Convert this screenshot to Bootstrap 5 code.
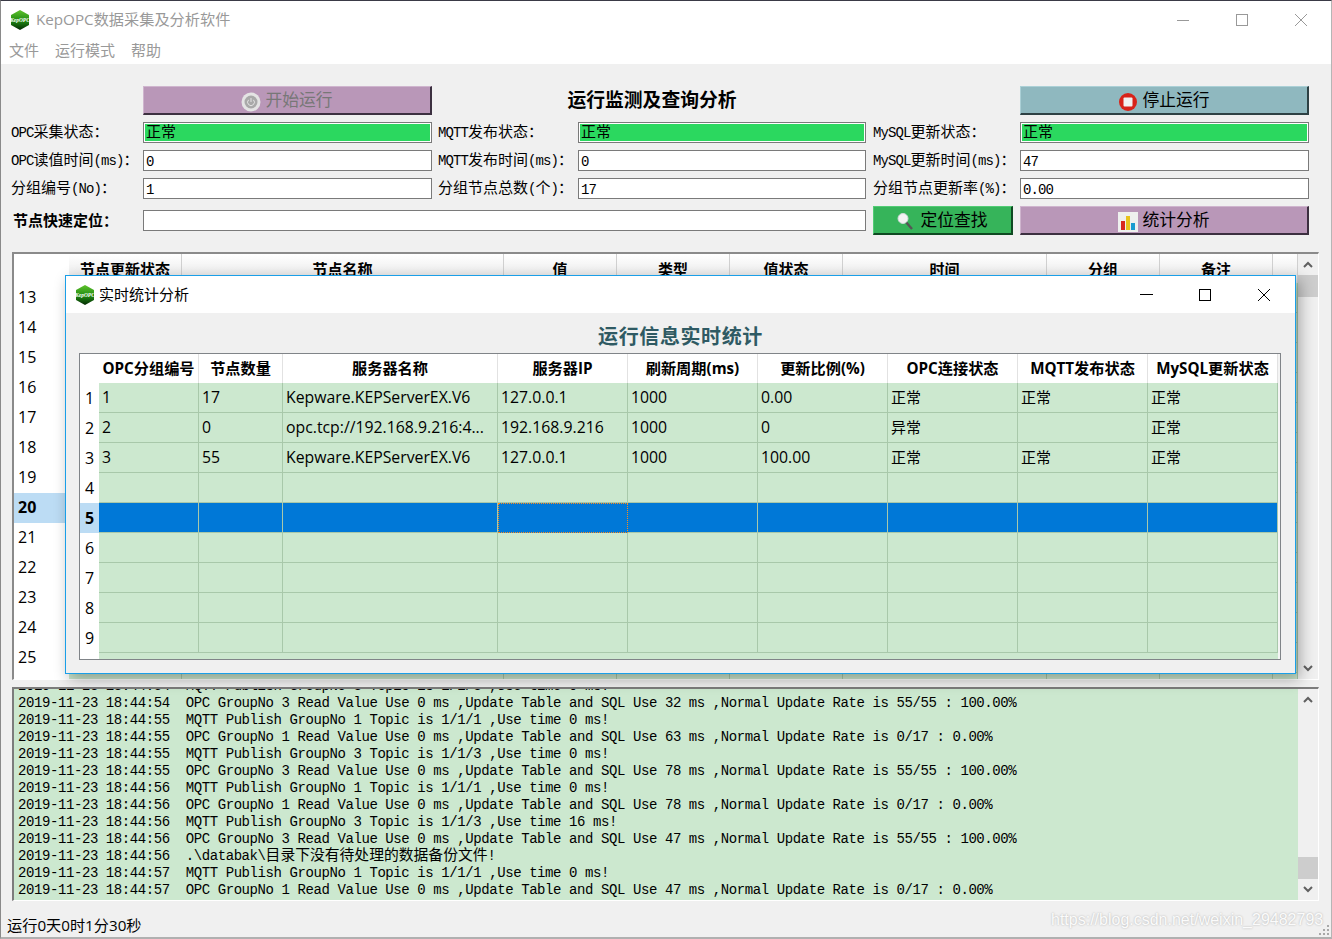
<!DOCTYPE html>
<html lang="zh-CN">
<head>
<meta charset="utf-8">
<title>KepOPC数据采集及分析软件</title>
<link href="https://cdn.jsdelivr.net/npm/bootstrap@5.3.0/dist/css/bootstrap.min.css" rel="stylesheet">
<style>
html,body{height:100%}
body{margin:0;background:#f0f0f0;color:#000;font-family:"Open Sans","Noto Sans CJK SC",sans-serif;font-size:15px;overflow:hidden}
.appwin{width:1332px;height:939px;border-left:1px solid #8a8a8a;border-right:1px solid #b5b5b5;border-top:1px solid #3a3a46;border-bottom:2px solid #b0b0b0;position:relative;overflow:hidden}
.titlerow{height:37px;background:#fff;color:#999}
.titlerow .ttl{font-size:15.2px;margin-left:5px}
.logo{width:22px;height:22px;margin-left:8px;flex:none}
.titlerow .winbtns{margin-right:1px}
.ctl{width:58.7px;height:100%;display:flex;align-items:center;justify-content:center}
.menurow{height:26px;background:#fff;color:#999;padding:0 0 2px 8px;gap:16px;font-size:15px}
.formgrid{display:grid;grid-template-columns:132px 289px 146px 288px 154px 289px;grid-template-rows:29px 21px 21px 21px 29px;row-gap:7px;margin:22px 0 0 10px;align-items:center}
.lbl{font-family:"Liberation Mono","Noto Sans CJK SC",monospace;font-size:15px;line-height:21px;white-space:nowrap;padding-top:2px}
.lbl.mid{padding-left:6px}
.lbl.rgt{padding-left:7px}
.lbl.strong{font-weight:700;padding:3px 0 0 2px}
.lat{font-family:"Liberation Mono",monospace;font-size:14px;letter-spacing:-.9px}
.fld.form-control{border:1px solid #7a7a7a;border-radius:0;background:#fff;padding:0 2px;height:21px;min-height:0;line-height:22px;font-family:"Liberation Mono","Noto Sans CJK SC",monospace;font-size:14px;letter-spacing:-.9px;color:#000}
.fld.okfld{background:#2bd85f;box-shadow:inset 0 0 0 1px #fff;font-size:15px;letter-spacing:0;line-height:21px;padding-left:2px}
.wide{grid-column:2/5}
.headline{grid-column:3/5;text-align:center;padding-left:6px;font-size:18.8px;font-weight:700;line-height:29px}
.hmi.btn{height:29px;padding:3px 0 0;border-radius:0;border-style:solid;border-width:1px 2px 2px 1px;font-size:16.8px;line-height:24px;display:flex;align-items:center;justify-content:center;gap:4px;color:#000;font-family:"Liberation Mono","Noto Sans CJK SC",monospace;--bs-btn-hover-color:#000}
.purp.btn{background:#b997b8;border-color:#cfb5ce #3c3040 #3c3040 #cfb5ce}
.purp.off.btn{color:#777}
.teal.btn{background:#8fb8bf;border-color:#abd0d6 #2e4144 #2e4144 #abd0d6}
.grn.btn{background:#36b45a;border-color:#52cc75 #0f4a22 #0f4a22 #52cc75;margin:0 7px;gap:6px}
.backwrap{margin:17px 0 0 11px;width:1307px;height:428px;border-top:2px solid #8a8a8a;border-left:2px solid #8a8a8a;border-right:1px solid #fff;border-bottom:1px solid #fff;background:#fff;overflow:hidden}
.gridt.table{table-layout:fixed;border-collapse:separate;border-spacing:0;margin:0;width:auto}
.gridt th,.gridt td{padding:0 3px;font-weight:400;color:#000;white-space:nowrap;overflow:hidden;vertical-align:middle;box-shadow:none}
.back th{height:29px;background:linear-gradient(#fff,#e6e6e6);font-weight:700;text-align:center;border:0;border-right:1px solid #d0d0d0;font-size:15px;padding-top:5px;line-height:20px;vertical-align:top}
.back td{height:30px;background:#cce8cf;border:0;border-right:1px solid #a8c8aa;border-bottom:1px solid #a8c8aa}
.back .rh{background:#fff;border:0;padding:0 0 2px 4px;font-size:16px}
.back .rh.act{background:#bcdcf4;font-weight:700}
.c55{width:55px}.c113{width:113px}.c322{width:322px}.c204{width:204px}.c25{width:25px}
.sbar{width:20px;background:#f0f0f0;flex:none;display:flex;flex-direction:column;align-items:stretch}
.sarrow{height:21px;display:flex;align-items:center;justify-content:center;flex:none}
.sthumb{height:22px;background:#cdcdcd;flex:none}
.sgap{flex:1}
.logwrap{margin:7px 0 0 11px;width:1307px;height:214px;border-top:2px solid #7c7c7c;border-left:2px solid #7c7c7c;border-right:1px solid #fff;border-bottom:1px solid #fff}
.logbox{background:#cce8cf;overflow:hidden;display:flex;flex-direction:column;justify-content:flex-end;padding:0 0 1px 4px;font-family:"Liberation Mono",monospace;font-size:14px;letter-spacing:-.415px;line-height:17px;white-space:pre;flex:1}
.logbox .cj{font-family:"Noto Sans CJK SC",sans-serif;font-size:14.8px;letter-spacing:0;line-height:0}
.logline{height:17px;flex:none}
.statusrow{height:36px;padding:12px 0 0 6px;font-size:15.2px;display:flex;align-items:center}
.mark-wm{position:absolute;left:1050px;top:907px;font-family:"Liberation Sans",sans-serif;font-size:16px;color:#fbfbfb;text-shadow:0 0 2px #aaa;white-space:nowrap;line-height:24px}
.grip{position:absolute;right:1px;bottom:1px}
.subwin{position:absolute;left:64px;top:274px;width:1231px;height:399px;background:#f0f0f0;border:1px solid #1a9fe8;box-shadow:4px 5px 14px rgba(0,0,0,.32);z-index:5}
.subtitle{height:37px;background:#fff}
.subtitle .ttl{font-size:15px;margin-left:3px}
.subtitle .logo{margin-left:8px}
.subtitle .winbtns{margin-right:2px}
.subhead{height:40px;line-height:46px;text-align:center;font-size:20px;font-weight:700;color:#2f5a63;letter-spacing:.6px;font-family:"Noto Sans CJK SC",sans-serif}
.subgrid{margin-left:13px;width:1202px;height:307px;border:1px solid #808488;background:#f4f4f4;overflow:hidden}
.sub th{height:29px;background:#fff;font-weight:700;text-align:center;border:0;border-right:1px solid #e2e2e2;font-size:15.2px;padding:0}
.sub td{height:30px;background:#cce8cf;border:0;border-right:1px solid #a8c8aa;border-bottom:1px solid #a8c8aa;font-size:15.8px}
.sub tbody tr:last-child td{border-right-color:transparent}
.sub .cjc{font-size:15px}
.sub .rh{background:#fff;border:0;text-align:center;padding:0 0 1px;font-size:16px}
.sub th.rh{padding:0}
.sub .rh.act{background:#bcdcf4;font-weight:700}
.sub tr.sel td:not(.rh){background:#0078d7;border-right-color:#a8c8aa;border-bottom-color:#a8c8aa}
.sub tr.sel td.focus{border:1px dotted #ff8c1a}
.c18{width:19px}.c100{width:100px}.c84{width:84px}.c215{width:215px}.c130{width:130px}
</style>
</head>
<body>
<div class="appwin d-flex flex-column">
  <div class="titlerow d-flex align-items-center">
    <svg class="logo" viewBox="0 0 22 22"><defs><linearGradient id="lg" x1="0" y1="0" x2="0" y2="1"><stop offset="0" stop-color="#5fc22c"/><stop offset=".55" stop-color="#1f8a12"/><stop offset="1" stop-color="#042a04"/></linearGradient></defs><polygon points="11,1 20,6 20,16 11,21 2,16 2,6" fill="url(#lg)"/><text x="11" y="12.5" font-size="5.4" font-style="italic" font-weight="700" text-anchor="middle" fill="#fff" font-family="Liberation Serif">KepOPC</text></svg>
    <span class="ttl">KepOPC数据采集及分析软件</span>
    <div class="winbtns ms-auto d-flex h-100">
      <div class="ctl"><svg width="12" height="12" viewBox="0 0 12 12"><path d="M0 6.5h12" stroke="#999" fill="none"/></svg></div>
      <div class="ctl"><svg width="12" height="12" viewBox="0 0 12 12"><rect x=".5" y=".5" width="11" height="11" stroke="#999" fill="none"/></svg></div>
      <div class="ctl"><svg width="12" height="12" viewBox="0 0 12 12"><path d="M0 0l12 12M12 0L0 12" stroke="#999" fill="none"/></svg></div>
    </div>
  </div>
  <div class="menurow d-flex align-items-center"><span>文件</span><span>运行模式</span><span>帮助</span></div>

  <div class="formgrid">
    <div></div>
    <button type="button" class="hmi btn purp off"><svg width="20" height="20" viewBox="0 0 20 20"><circle cx="10" cy="10" r="9.5" fill="#e4e4e4"/><circle cx="10" cy="10" r="6.5" fill="#a9a9a9"/><path d="M7.6 7.8a3.4 3.4 0 1 0 4.8 0M10 6v4" stroke="#e4e4e4" stroke-width="1" fill="none"/></svg><span>开始运行</span></button>
    <div class="headline">运行监测及查询分析</div>
    <div></div>
    <button type="button" class="hmi btn teal"><svg width="20" height="20" viewBox="0 0 20 20"><circle cx="10" cy="10" r="9" fill="#d8231a"/><rect x="5.5" y="5.5" width="9" height="9" rx="1" fill="#f1f1f1"/></svg><span>停止运行</span></button>

    <div class="lbl"><span class="lat">OPC</span>采集状态：</div>
    <div class="fld okfld form-control">正常</div>
    <div class="lbl mid"><span class="lat">MQTT</span>发布状态：</div>
    <div class="fld okfld form-control">正常</div>
    <div class="lbl rgt"><span class="lat">MySQL</span>更新状态：</div>
    <div class="fld okfld form-control">正常</div>

    <div class="lbl"><span class="lat">OPC</span>读值时间<span class="lat">(ms)</span>：</div>
    <div class="fld form-control">0</div>
    <div class="lbl mid"><span class="lat">MQTT</span>发布时间<span class="lat">(ms)</span>：</div>
    <div class="fld form-control">0</div>
    <div class="lbl rgt"><span class="lat">MySQL</span>更新时间<span class="lat">(ms)</span>：</div>
    <div class="fld form-control">47</div>

    <div class="lbl">分组编号<span class="lat">(No)</span>：</div>
    <div class="fld form-control">1</div>
    <div class="lbl mid">分组节点总数<span class="lat">(</span>个<span class="lat">)</span>：</div>
    <div class="fld form-control">17</div>
    <div class="lbl rgt">分组节点更新率<span class="lat">(%)</span>：</div>
    <div class="fld form-control">0.00</div>

    <div class="lbl strong">节点快速定位：</div>
    <div class="fld form-control wide"></div>
    <button type="button" class="hmi btn grn"><svg width="17" height="19" viewBox="0 0 17 19"><path d="M8 9l7 8" stroke="#555" stroke-width="2.4"/><circle cx="6" cy="6.5" r="5" fill="#f3f3f3" stroke="#cfd8d8"/></svg><span>定位查找</span></button>
    <button type="button" class="hmi btn purp"><svg width="20" height="20" viewBox="0 0 20 20"><rect width="20" height="20" fill="#eef0ee"/><rect x="3" y="9" width="4" height="9" fill="#d8281e"/><rect x="8" y="4" width="4" height="14" fill="#e8c21c"/><rect x="13" y="11" width="4" height="7" fill="#1a9cd0"/></svg><span>统计分析</span></button>
  </div>

  <div class="backwrap d-flex">
    <div class="flex-grow-1 overflow-hidden">
      <table class="table gridt back">
        <colgroup><col class="c55"><col class="c113"><col class="c322"><col class="c113"><col class="c113"><col class="c113"><col class="c204"><col class="c113"><col class="c113"><col class="c25"></colgroup>
        <thead><tr><th class="rh"></th><th>节点更新状态</th><th>节点名称</th><th>值</th><th>类型</th><th>值状态</th><th>时间</th><th>分组</th><th>备注</th><th></th></tr></thead>
        <tbody>
          <tr><td class="rh">13</td><td></td><td></td><td></td><td></td><td></td><td></td><td></td><td></td><td></td></tr>
          <tr><td class="rh">14</td><td></td><td></td><td></td><td></td><td></td><td></td><td></td><td></td><td></td></tr>
          <tr><td class="rh">15</td><td></td><td></td><td></td><td></td><td></td><td></td><td></td><td></td><td></td></tr>
          <tr><td class="rh">16</td><td></td><td></td><td></td><td></td><td></td><td></td><td></td><td></td><td></td></tr>
          <tr><td class="rh">17</td><td></td><td></td><td></td><td></td><td></td><td></td><td></td><td></td><td></td></tr>
          <tr><td class="rh">18</td><td></td><td></td><td></td><td></td><td></td><td></td><td></td><td></td><td></td></tr>
          <tr><td class="rh">19</td><td></td><td></td><td></td><td></td><td></td><td></td><td></td><td></td><td></td></tr>
          <tr><td class="rh act">20</td><td></td><td></td><td></td><td></td><td></td><td></td><td></td><td></td><td></td></tr>
          <tr><td class="rh">21</td><td></td><td></td><td></td><td></td><td></td><td></td><td></td><td></td><td></td></tr>
          <tr><td class="rh">22</td><td></td><td></td><td></td><td></td><td></td><td></td><td></td><td></td><td></td></tr>
          <tr><td class="rh">23</td><td></td><td></td><td></td><td></td><td></td><td></td><td></td><td></td><td></td></tr>
          <tr><td class="rh">24</td><td></td><td></td><td></td><td></td><td></td><td></td><td></td><td></td><td></td></tr>
          <tr><td class="rh">25</td><td></td><td></td><td></td><td></td><td></td><td></td><td></td><td></td><td></td></tr>
          <tr><td class="rh"></td><td></td><td></td><td></td><td></td><td></td><td></td><td></td><td></td><td></td></tr>
        </tbody>
      </table>
    </div>
    <div class="sbar">
      <div class="sarrow"><svg width="10" height="7" viewBox="0 0 10 7"><path d="M1 6l4-4 4 4" stroke="#606060" stroke-width="2" fill="none"/></svg></div>
      <div class="sthumb"></div><div class="sgap"></div>
      <div class="sarrow"><svg width="10" height="7" viewBox="0 0 10 7"><path d="M1 1l4 4 4-4" stroke="#606060" stroke-width="2" fill="none"/></svg></div>
    </div>
  </div>

  <div class="logwrap d-flex">
    <div class="logbox">
<div class="logline">2019-11-23 18:44:54  MQTT Publish GroupNo 3 Topic is 1/1/3 ,Use time 0 ms!</div>
<div class="logline">2019-11-23 18:44:54  OPC GroupNo 3 Read Value Use 0 ms ,Update Table and SQL Use 32 ms ,Normal Update Rate is 55/55 : 100.00%</div>
<div class="logline">2019-11-23 18:44:55  MQTT Publish GroupNo 1 Topic is 1/1/1 ,Use time 0 ms!</div>
<div class="logline">2019-11-23 18:44:55  OPC GroupNo 1 Read Value Use 0 ms ,Update Table and SQL Use 63 ms ,Normal Update Rate is 0/17 : 0.00%</div>
<div class="logline">2019-11-23 18:44:55  MQTT Publish GroupNo 3 Topic is 1/1/3 ,Use time 0 ms!</div>
<div class="logline">2019-11-23 18:44:55  OPC GroupNo 3 Read Value Use 0 ms ,Update Table and SQL Use 78 ms ,Normal Update Rate is 55/55 : 100.00%</div>
<div class="logline">2019-11-23 18:44:56  MQTT Publish GroupNo 1 Topic is 1/1/1 ,Use time 0 ms!</div>
<div class="logline">2019-11-23 18:44:56  OPC GroupNo 1 Read Value Use 0 ms ,Update Table and SQL Use 78 ms ,Normal Update Rate is 0/17 : 0.00%</div>
<div class="logline">2019-11-23 18:44:56  MQTT Publish GroupNo 3 Topic is 1/1/3 ,Use time 16 ms!</div>
<div class="logline">2019-11-23 18:44:56  OPC GroupNo 3 Read Value Use 0 ms ,Update Table and SQL Use 47 ms ,Normal Update Rate is 55/55 : 100.00%</div>
<div class="logline">2019-11-23 18:44:56  .\databak\<span class="cj">目录下没有待处理的数据备份文件</span>!</div>
<div class="logline">2019-11-23 18:44:57  MQTT Publish GroupNo 1 Topic is 1/1/1 ,Use time 0 ms!</div>
<div class="logline">2019-11-23 18:44:57  OPC GroupNo 1 Read Value Use 0 ms ,Update Table and SQL Use 47 ms ,Normal Update Rate is 0/17 : 0.00%</div>
    </div>
    <div class="sbar">
      <div class="sarrow"><svg width="10" height="7" viewBox="0 0 10 7"><path d="M1 6l4-4 4 4" stroke="#606060" stroke-width="2" fill="none"/></svg></div>
      <div class="sgap"></div><div class="sthumb"></div>
      <div class="sarrow"><svg width="10" height="7" viewBox="0 0 10 7"><path d="M1 1l4 4 4-4" stroke="#606060" stroke-width="2" fill="none"/></svg></div>
    </div>
  </div>

  <div class="statusrow">运行0天0时1分30秒</div>
  <div class="mark-wm">https://blog.csdn.net/weixin_29482793</div>
  <svg class="grip" width="12" height="12" viewBox="0 0 12 12" fill="#a8a8a8"><rect x="9" y="1" width="2" height="2"/><rect x="5" y="5" width="2" height="2"/><rect x="9" y="5" width="2" height="2"/><rect x="1" y="9" width="2" height="2"/><rect x="5" y="9" width="2" height="2"/><rect x="9" y="9" width="2" height="2"/></svg>

  <div class="subwin">
    <div class="subtitle d-flex align-items-center">
      <svg class="logo" viewBox="0 0 22 22"><polygon points="11,1 20,6 20,16 11,21 2,16 2,6" fill="url(#lg)"/><text x="11" y="12.5" font-size="5.4" font-style="italic" font-weight="700" text-anchor="middle" fill="#fff" font-family="Liberation Serif">KepOPC</text></svg>
      <span class="ttl">实时统计分析</span>
      <div class="winbtns ms-auto d-flex h-100">
        <div class="ctl"><svg width="13" height="12" viewBox="0 0 13 12"><path d="M0 5.5h13" stroke="#000" fill="none"/></svg></div>
        <div class="ctl"><svg width="12" height="12" viewBox="0 0 12 12"><rect x=".5" y=".5" width="11" height="11" stroke="#000" fill="none"/></svg></div>
        <div class="ctl"><svg width="12" height="12" viewBox="0 0 12 12"><path d="M0 0l12 12M12 0L0 12" stroke="#000" fill="none"/></svg></div>
      </div>
    </div>
    <div class="subhead">运行信息实时统计</div>
    <div class="subgrid">
      <table class="table gridt sub">
        <colgroup><col class="c18"><col class="c100"><col class="c84"><col class="c215"><col class="c130"><col class="c130"><col class="c130"><col class="c130"><col class="c130"><col class="c130"></colgroup>
        <thead><tr><th class="rh"></th><th>OPC分组编号</th><th>节点数量</th><th>服务器名称</th><th>服务器IP</th><th>刷新周期(ms)</th><th>更新比例(%)</th><th>OPC连接状态</th><th>MQTT发布状态</th><th>MySQL更新状态</th></tr></thead>
        <tbody>
          <tr><td class="rh">1</td><td>1</td><td>17</td><td>Kepware.KEPServerEX.V6</td><td>127.0.0.1</td><td>1000</td><td>0.00</td><td class="cjc">正常</td><td class="cjc">正常</td><td class="cjc">正常</td></tr>
          <tr><td class="rh">2</td><td>2</td><td>0</td><td>opc.tcp://192.168.9.216:4...</td><td>192.168.9.216</td><td>1000</td><td>0</td><td class="cjc">异常</td><td></td><td class="cjc">正常</td></tr>
          <tr><td class="rh">3</td><td>3</td><td>55</td><td>Kepware.KEPServerEX.V6</td><td>127.0.0.1</td><td>1000</td><td>100.00</td><td class="cjc">正常</td><td class="cjc">正常</td><td class="cjc">正常</td></tr>
          <tr><td class="rh">4</td><td></td><td></td><td></td><td></td><td></td><td></td><td></td><td></td><td></td></tr>
          <tr class="sel"><td class="rh act">5</td><td></td><td></td><td></td><td class="focus"></td><td></td><td></td><td></td><td></td><td></td></tr>
          <tr><td class="rh">6</td><td></td><td></td><td></td><td></td><td></td><td></td><td></td><td></td><td></td></tr>
          <tr><td class="rh">7</td><td></td><td></td><td></td><td></td><td></td><td></td><td></td><td></td><td></td></tr>
          <tr><td class="rh">8</td><td></td><td></td><td></td><td></td><td></td><td></td><td></td><td></td><td></td></tr>
          <tr><td class="rh">9</td><td></td><td></td><td></td><td></td><td></td><td></td><td></td><td></td><td></td></tr>
          <tr><td class="rh"></td><td></td><td></td><td></td><td></td><td></td><td></td><td></td><td></td><td></td></tr>
        </tbody>
      </table>
    </div>
  </div>
</div>
</body>
</html>
